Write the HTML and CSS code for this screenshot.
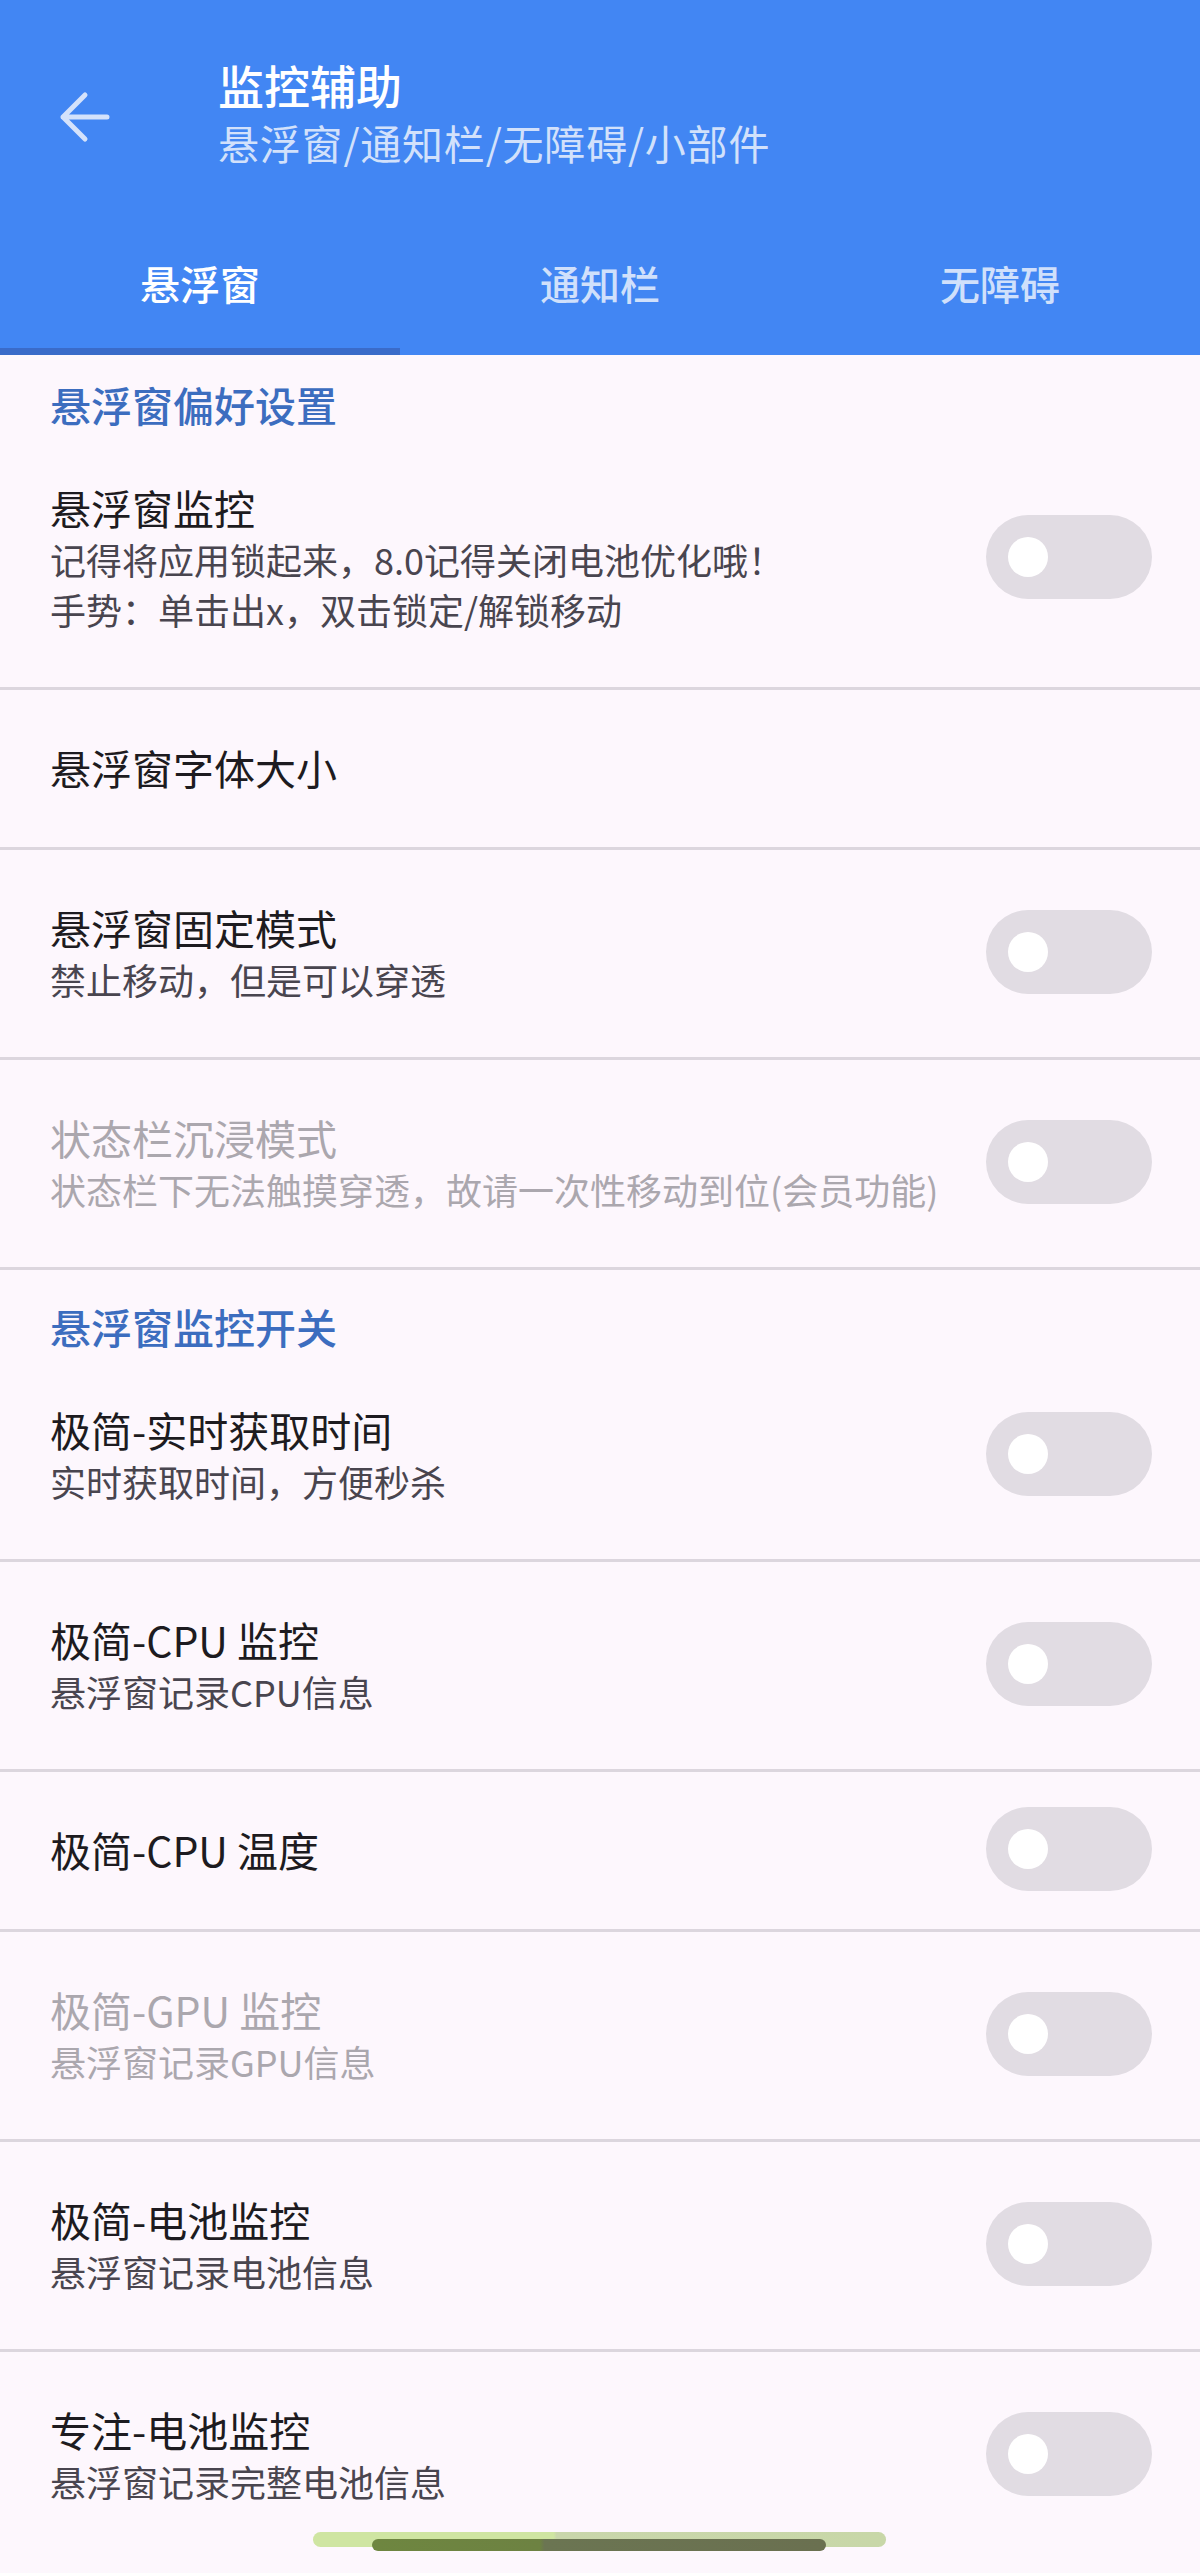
FILE: index.html
```html
<!DOCTYPE html>
<html lang="zh-CN">
<head>
<meta charset="utf-8">
<title>监控辅助</title>
<link rel="stylesheet" href="styles.css">
</head>
<body>
<div class="page">
  <header class="appbar">
    <div class="toolbar">
      <div class="back">
        <svg width="52" height="52" viewBox="0 0 52 52" aria-hidden="true">
          <path d="M49 26 H5 M27 4 L5 26 L27 48" fill="none" stroke="#d4e2fb" stroke-width="5" stroke-linecap="round" stroke-linejoin="round"/>
        </svg>
      </div>
      <div class="titles">
        <div class="title">监控辅助</div>
        <div class="subtitle">悬浮窗/通知栏/无障碍/小部件</div>
      </div>
    </div>
    <nav class="tabs">
      <div class="tab selected">悬浮窗</div>
      <div class="tab">通知栏</div>
      <div class="tab">无障碍</div>
    </nav>
  </header>

  <main class="list">
    <div class="section first">悬浮窗偏好设置</div>

    <div class="item">
      <div class="text">
        <div class="item-title">悬浮窗监控</div>
        <div class="item-sub">记得将应用锁起来，8.0记得关闭电池优化哦！</div>
        <div class="item-sub">手势：单击出x，双击锁定/解锁移动</div>
      </div>
      <div class="switch"><span class="thumb"></span></div>
    </div>
    <div class="divider"></div>

    <div class="item">
      <div class="text">
        <div class="item-title">悬浮窗字体大小</div>
      </div>
    </div>
    <div class="divider"></div>

    <div class="item">
      <div class="text">
        <div class="item-title">悬浮窗固定模式</div>
        <div class="item-sub">禁止移动，但是可以穿透</div>
      </div>
      <div class="switch"><span class="thumb"></span></div>
    </div>
    <div class="divider"></div>

    <div class="item disabled">
      <div class="text">
        <div class="item-title">状态栏沉浸模式</div>
        <div class="item-sub">状态栏下无法触摸穿透，故请一次性移动到位(会员功能)</div>
      </div>
      <div class="switch"><span class="thumb"></span></div>
    </div>
    <div class="divider"></div>

    <div class="section">悬浮窗监控开关</div>

    <div class="item">
      <div class="text">
        <div class="item-title">极简-实时获取时间</div>
        <div class="item-sub">实时获取时间，方便秒杀</div>
      </div>
      <div class="switch"><span class="thumb"></span></div>
    </div>
    <div class="divider"></div>

    <div class="item">
      <div class="text">
        <div class="item-title">极简-CPU 监控</div>
        <div class="item-sub">悬浮窗记录CPU信息</div>
      </div>
      <div class="switch"><span class="thumb"></span></div>
    </div>
    <div class="divider"></div>

    <div class="item">
      <div class="text">
        <div class="item-title">极简-CPU 温度</div>
      </div>
      <div class="switch"><span class="thumb"></span></div>
    </div>
    <div class="divider"></div>

    <div class="item disabled">
      <div class="text">
        <div class="item-title">极简-GPU 监控</div>
        <div class="item-sub">悬浮窗记录GPU信息</div>
      </div>
      <div class="switch"><span class="thumb"></span></div>
    </div>
    <div class="divider"></div>

    <div class="item">
      <div class="text">
        <div class="item-title">极简-电池监控</div>
        <div class="item-sub">悬浮窗记录电池信息</div>
      </div>
      <div class="switch"><span class="thumb"></span></div>
    </div>
    <div class="divider"></div>

    <div class="item">
      <div class="text">
        <div class="item-title">专注-电池监控</div>
        <div class="item-sub">悬浮窗记录完整电池信息</div>
      </div>
      <div class="switch"><span class="thumb"></span></div>
    </div>
  </main>

  <div class="gesture">
    <span class="gesture-glow"></span>
    <span class="gesture-bar"></span>
  </div>
</div>
</body>
</html>
```

FILE: styles.css
```css
* {
  box-sizing: border-box;
}

html, body {
  margin: 0;
  padding: 0;
}

body {
  background: #fdf7fd;
  font-family: "Noto Sans CJK SC", "Noto Sans", sans-serif;
  color: #1d1b20;
}

.page {
  position: relative;
  width: 1200px;
  height: 2573px;
  overflow: hidden;
  background: #fdf7fd;
}

/* ---------- app bar ---------- */
.appbar {
  background: #4286f3;
  color: #fff;
}

.toolbar {
  display: flex;
  align-items: center;
  height: 237px;
  padding-top: 2px;
}

.back {
  width: 218px;
  padding-left: 58px;
  display: flex;
  align-items: center;
  margin-top: -6px;
}

.back svg {
  display: block;
}

.titles {
  display: flex;
  flex-direction: column;
  margin-bottom: 11px;
}

.title {
  font-size: 46px;
  line-height: 56px;
  font-weight: 500;
  color: #ffffff;
}

.subtitle {
  font-size: 41px;
  line-height: 60px;
  letter-spacing: 0.8px;
  color: #d2e1fb;
}

.tabs {
  display: flex;
  height: 118px;
}

.tab {
  flex: 1;
  height: 118px;
  padding-top: 21px;
  text-align: center;
  font-size: 40px;
  line-height: 50px;
  font-weight: 500;
  color: #d0e0fb;
  border-bottom: 7px solid transparent;
}

.tab.selected {
  color: #ffffff;
  border-bottom-color: #3a6bc9;
}

/* ---------- list ---------- */
.list {
  display: flex;
  flex-direction: column;
}

.section {
  padding: 30px 50px 0;
  font-size: 41px;
  line-height: 52px;
  font-weight: 500;
  color: #3c6dbf;
}

.section.first {
  padding-top: 23px;
}

.item {
  display: flex;
  align-items: center;
  justify-content: space-between;
  padding: 50px 48px 53px 50px;
}

.text {
  display: flex;
  flex-direction: column;
}

.item-title {
  font-size: 41px;
  line-height: 54px;
  color: #1d1b20;
}

.item-sub {
  font-size: 36px;
  line-height: 50px;
  color: #49454f;
}

.item.disabled .item-title,
.item.disabled .item-sub {
  color: #aba7ae;
}

.switch {
  flex: none;
  width: 166px;
  height: 84px;
  margin: -20px 0;
  border-radius: 42px;
  background: #e1dce3;
  display: flex;
  align-items: center;
  padding-left: 22px;
}

.thumb {
  display: block;
  width: 40px;
  height: 40px;
  border-radius: 50%;
  background: #ffffff;
}

.divider {
  height: 3px;
  background: #dcd6de;
}

/* ---------- gesture navigation bar ---------- */
.gesture {
  position: absolute;
  left: 0;
  top: 2532px;
  width: 1200px;
  height: 20px;
}

.gesture-glow {
  position: absolute;
  left: 313px;
  top: 0;
  width: 573px;
  height: 15px;
  border-radius: 8px;
  background: linear-gradient(90deg, #cfe5a2 0%, #cfe5a2 42%, #c9d6ab 42.5%, #c8d7a8 100%);
}

.gesture-bar {
  position: absolute;
  left: 372px;
  top: 7px;
  width: 454px;
  height: 12px;
  border-radius: 6px;
  background: linear-gradient(90deg, #6e8640 0%, #6d8242 37%, #6b7552 38%, #6a7050 100%);
}
```
